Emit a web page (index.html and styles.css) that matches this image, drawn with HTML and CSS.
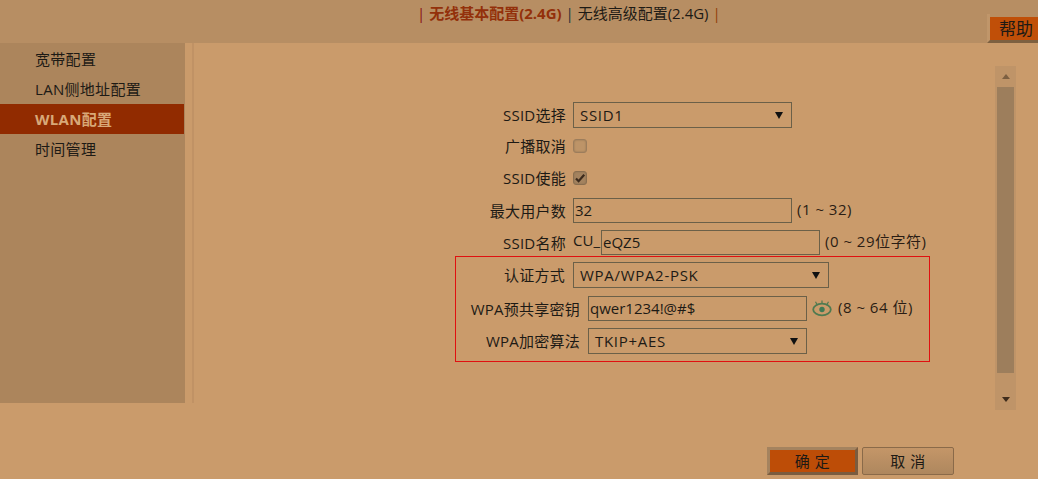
FILE: index.html
```html
<!DOCTYPE html>
<html lang="zh">
<head>
<meta charset="utf-8">
<title>WLAN配置</title>
<link rel="stylesheet" href="styles.css">
</head>
<body>
<div class="page">
  <header class="top">
    <nav class="tabs"><span class="bar-a">|</span> <b class="active">无线基本配置(2.4G)</b> <span class="bar-b">|</span> <span>无线高级配置(2.4G)</span> <span class="bar-c">|</span></nav>
    <div class="help"><span class="help-face">帮助</span></div>
  </header>
  <div class="main">
    <aside class="side">
      <ul class="menu">
        <li>宽带配置</li>
        <li>LAN侧地址配置</li>
        <li class="current">WLAN配置</li>
        <li>时间管理</li>
      </ul>
    </aside>
    <div class="rule"></div>
    <section class="content">
      <form class="form">
        <div class="row r-select"><label class="lab">SSID选择</label><div class="sel w-219">SSID1<i class="arrow"></i></div></div>
        <div class="row r-check"><label class="lab">广播取消</label><span class="check"></span></div>
        <div class="row r-check"><label class="lab">SSID使能</label><span class="check on"><svg viewBox="0 0 12 12" width="12" height="12"><path d="M2 6.500 L4.600 9.200 L10.200 2.800" fill="none" stroke="#3b2a1c" stroke-width="2.200"/></svg></span></div>
        <div class="row r-input"><label class="lab">最大用户数</label><div class="inp w-219">32</div><span class="hint">(1 ~ 32)</span></div>
        <div class="row r-name"><label class="lab">SSID名称</label><span class="prefix">CU_</span><div class="inp w-219">eQZ5</div><span class="hint">(0 ~ 29位字符)</span></div>
        <div class="box">
          <div class="row b-1"><label class="lab lab-b1">认证方式</label><div class="sel w-256">WPA/WPA2-PSK<i class="arrow"></i></div></div>
          <div class="row b-2"><label class="lab lab-b2">WPA预共享密钥</label><div class="inp w-219">qwer1234!@#$</div>
            <svg class="eye" viewBox="0 0 20 17" width="20" height="17"><ellipse cx="10" cy="9.500" rx="8.800" ry="5.800" fill="none" stroke="#4f7a50" stroke-width="1.800"/><circle cx="10" cy="9.500" r="2.700" fill="#3f7a55"/><path d="M10 0.500 V3.500 M3.500 1.800 L5.200 4.800 M16.500 1.800 L14.800 4.800" stroke="#4f7a50" stroke-width="1.200"/></svg>
            <span class="hint">(8 ~ 64 位)</span></div>
          <div class="row b-3"><label class="lab lab-b2">WPA加密算法</label><div class="sel w-219">TKIP+AES<i class="arrow"></i></div></div>
        </div>
      </form>
      <div class="scroll">
        <div class="sb-btn"><i class="sb-up"></i></div>
        <div class="sb-thumb"></div>
        <div class="sb-track"></div>
        <div class="sb-btn"><i class="sb-down"></i></div>
      </div>
    </section>
  </div>
  <footer class="actions">
    <button class="btn ok" type="button">确 定</button>
    <button class="btn cancel" type="button">取 消</button>
  </footer>
</div>
</body>
</html>
```
FILE: styles.css
```css
* { box-sizing: border-box; }
html, body { margin: 0; padding: 0; }
body { background: #ca9b6b; font: 15px/20px "Open Sans", "Noto Sans CJK SC", sans-serif; color: #1d1a15; overflow: hidden; }
.page { width: 1038px; height: 479px; display: flex; flex-direction: column; }
.top { height: 43px; background: #b78e63; position: relative; display: flex; padding-left: 417px; }
.tabs { padding-top: 3px; white-space: nowrap; }
.active { color: #93300a; font-weight: 700; }
.bar-a { color: #8a1010; }
.bar-b { color: #23303a; }
.bar-c { color: #93400a; }
.help { position: absolute; right: 0; top: 14px; width: 51px; height: 29px; border-left: 3px solid #c0966a; padding-top: 3px; border-bottom: 3px solid #7d6040; }
.help-face { display: block; height: 23px; background: #c04f08; padding-left: 9px; font-size: 17px; line-height: 24px; color: #1d1a15; }
.main { height: 360px; display: flex; }
.side { width: 185px; background: #ac855c; }
.menu { list-style: none; margin: 0; padding: 1px 0 0; letter-spacing: .3px; }
.menu li { width: 184px; height: 30px; line-height: 31px; padding-left: 35px; }
.menu .current { background: #912b00; color: #d8a878; font-weight: 700; }
.rule { width: 2px; margin-left: 7px; background: #c09265; }
.content { flex: 1; display: flex; }
.form { width: 801px; padding-top: 59px; }
.row { display: flex; align-items: center; }
.lab { width: 379px; text-align: right; padding-right: 7px; flex: none; letter-spacing: .25px; }
.sel, .inp { height: 100%; border: 1px solid #6b6048; flex: none; position: relative; }
.sel { line-height: 24px; padding-left: 6px; letter-spacing: .7px; }
.inp { line-height: 23px; padding-left: 1px; }
.w-219 { width: 219px; }
.w-256 { width: 256px; }
.arrow { position: absolute; right: 8px; top: 9px; width: 0; height: 0; border: 4px solid transparent; border-top: 7px solid #111; border-bottom: 0; }
.r-select { height: 26px; }
.r-check { height: 32px; }
.r-select + .r-check { margin-top: 3px; }
.r-check .lab { margin-top: -2px; }
.r-input { height: 25px; margin-top: 3px; }
.r-name { height: 25px; margin-top: 7px; }
.check { width: 14px; height: 14px; border: 1px solid #9c7d5c; border-radius: 3px; background: #bd9468; display: block; margin-top: -3px; box-shadow: inset 0 0 2px #8a6f50; }
.check.on { background: #a4835f; border-color: #8a6f50; display: flex; align-items: center; justify-content: center; }
.hint { margin-left: 5px; color: #2a1d14; margin-top: -4px; white-space: nowrap; letter-spacing: .5px; }
.prefix { width: 28px; flex: none; margin-top: -5px; }
.box { width: 475px; height: 106px; margin: 1px 0 0 261px; border: 1px solid #e01010; padding-top: 5px; }
.box .lab-b1 { width: 117px; padding-right: 8px; }
.box .lab-b2 { width: 132px; padding-right: 8px; }
.b-1 { height: 26px; }
.b-2 { height: 25px; margin-top: 8px; }
.b-3 { height: 26px; margin-top: 7px; }
.eye { margin: -1px 0 0 5px; flex: none; }
.b-2 .hint { margin-left: 6px; }
.scroll { width: 21px; height: 344px; margin-top: 23px; background: #bf9468; display: flex; flex-direction: column; flex: none; }
.sb-btn { height: 21px; display: flex; align-items: center; justify-content: center; flex: none; }
.sb-thumb { height: 286px; width: 17px; margin: 0 auto; background: #9d7e5c; flex: none; }
.sb-track { flex: 1; }
.sb-up { width: 0; height: 0; border: 4.500px solid transparent; border-bottom: 5px solid #7d6042; border-top: 0; }
.sb-down { width: 0; height: 0; border: 4.500px solid transparent; border-top: 5px solid #3f2c1c; border-bottom: 0; }
.actions { display: flex; justify-content: flex-end; padding: 44px 84px 0 0; gap: 4px; }
.btn { font: 15px/20px "Open Sans", "Noto Sans CJK SC", sans-serif; color: #1d1a15; height: 28px; padding: 0; letter-spacing: .5px; }
.ok { width: 91px; background: #bd4d07; border: 3px solid; border-color: #a4835f #7a5c3f #7a5c3f #a4835f; }
.cancel { width: 92px; background: linear-gradient(#c49668, #ae875e); border: 1px solid #8a6a49; border-radius: 2px; }
```
